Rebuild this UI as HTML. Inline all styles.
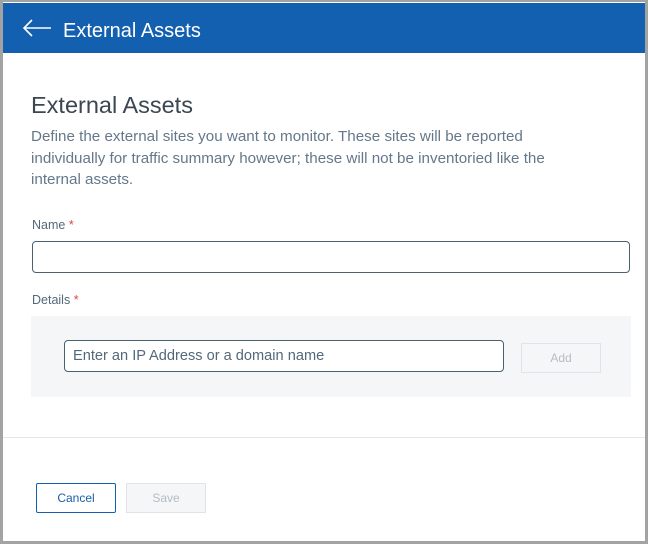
<!DOCTYPE html>
<html><head><style>
*{margin:0;padding:0;box-sizing:border-box}
body{width:648px;height:544px;background:#a3a3a3;font-family:"Liberation Sans",sans-serif;position:relative;overflow:hidden}
.win{position:absolute;left:3px;top:2px;width:642px;height:539px;background:#fff}
.hdr{position:absolute;left:0;top:1px;width:642px;height:50px;background:#1460b0;color:#fff}
.hdr span{position:absolute;left:60px;top:17px;font-size:20px}
.a{position:absolute}
h1{position:absolute;left:28px;top:90px;font-size:23.5px;font-weight:normal;color:#3a4651}
.desc{position:absolute;left:28px;top:124px;font-size:15.2px;line-height:21.5px;color:#64788a;white-space:nowrap}
.lbl{position:absolute;font-size:12.5px;color:#53687a}
.lbl b{color:#e0463a;font-weight:normal}
.inp{position:absolute;border:1px solid #4a6170;border-radius:4px;background:#fff}
.btn{position:absolute;font-size:12px;text-align:center;line-height:28px}
</style></head><body>
<div class="win">
<div class="hdr">
<svg class="a" style="left:18px;top:15px" width="32" height="20" viewBox="0 0 32 20"><path d="M30 10H3M11 2L3 10L11 18" fill="none" stroke="#fff" stroke-width="1.6"/></svg>
<span>External Assets</span>
</div>
<h1>External Assets</h1>
<div class="desc">Define the external sites you want to monitor. These sites will be reported<br>individually for traffic summary however; these will not be inventoried like the<br>internal assets.</div>
<div class="lbl" style="left:29px;top:216px">Name <b>*</b></div>
<div class="inp" style="left:29px;top:239px;width:598px;height:32px"></div>
<div class="lbl" style="left:29px;top:291px">Details <b>*</b></div>
<div class="a" style="left:28px;top:314px;width:600px;height:81px;background:#f4f6f8"></div>
<div class="inp" style="left:61px;top:338px;width:440px;height:32px;font-size:14.6px;color:#53687a;padding:7px 0 0 8px">Enter an IP Address or a domain name</div>
<div class="btn" style="left:518px;top:341px;width:80px;height:30px;border:1px solid #e0e4e8;color:#b4bcc4">Add</div>
<div class="a" style="left:0;top:435px;width:642px;height:1px;background:#e4e6e8"></div>
<div class="btn" style="left:33px;top:481px;width:80px;height:30px;border:1px solid #1460b0;border-radius:2px;color:#1a5ea8">Cancel</div>
<div class="btn" style="left:123px;top:481px;width:80px;height:30px;border:1px solid #e0e4e8;background:#f5f6f7;color:#b4bcc4">Save</div>
</div>
</body></html>
